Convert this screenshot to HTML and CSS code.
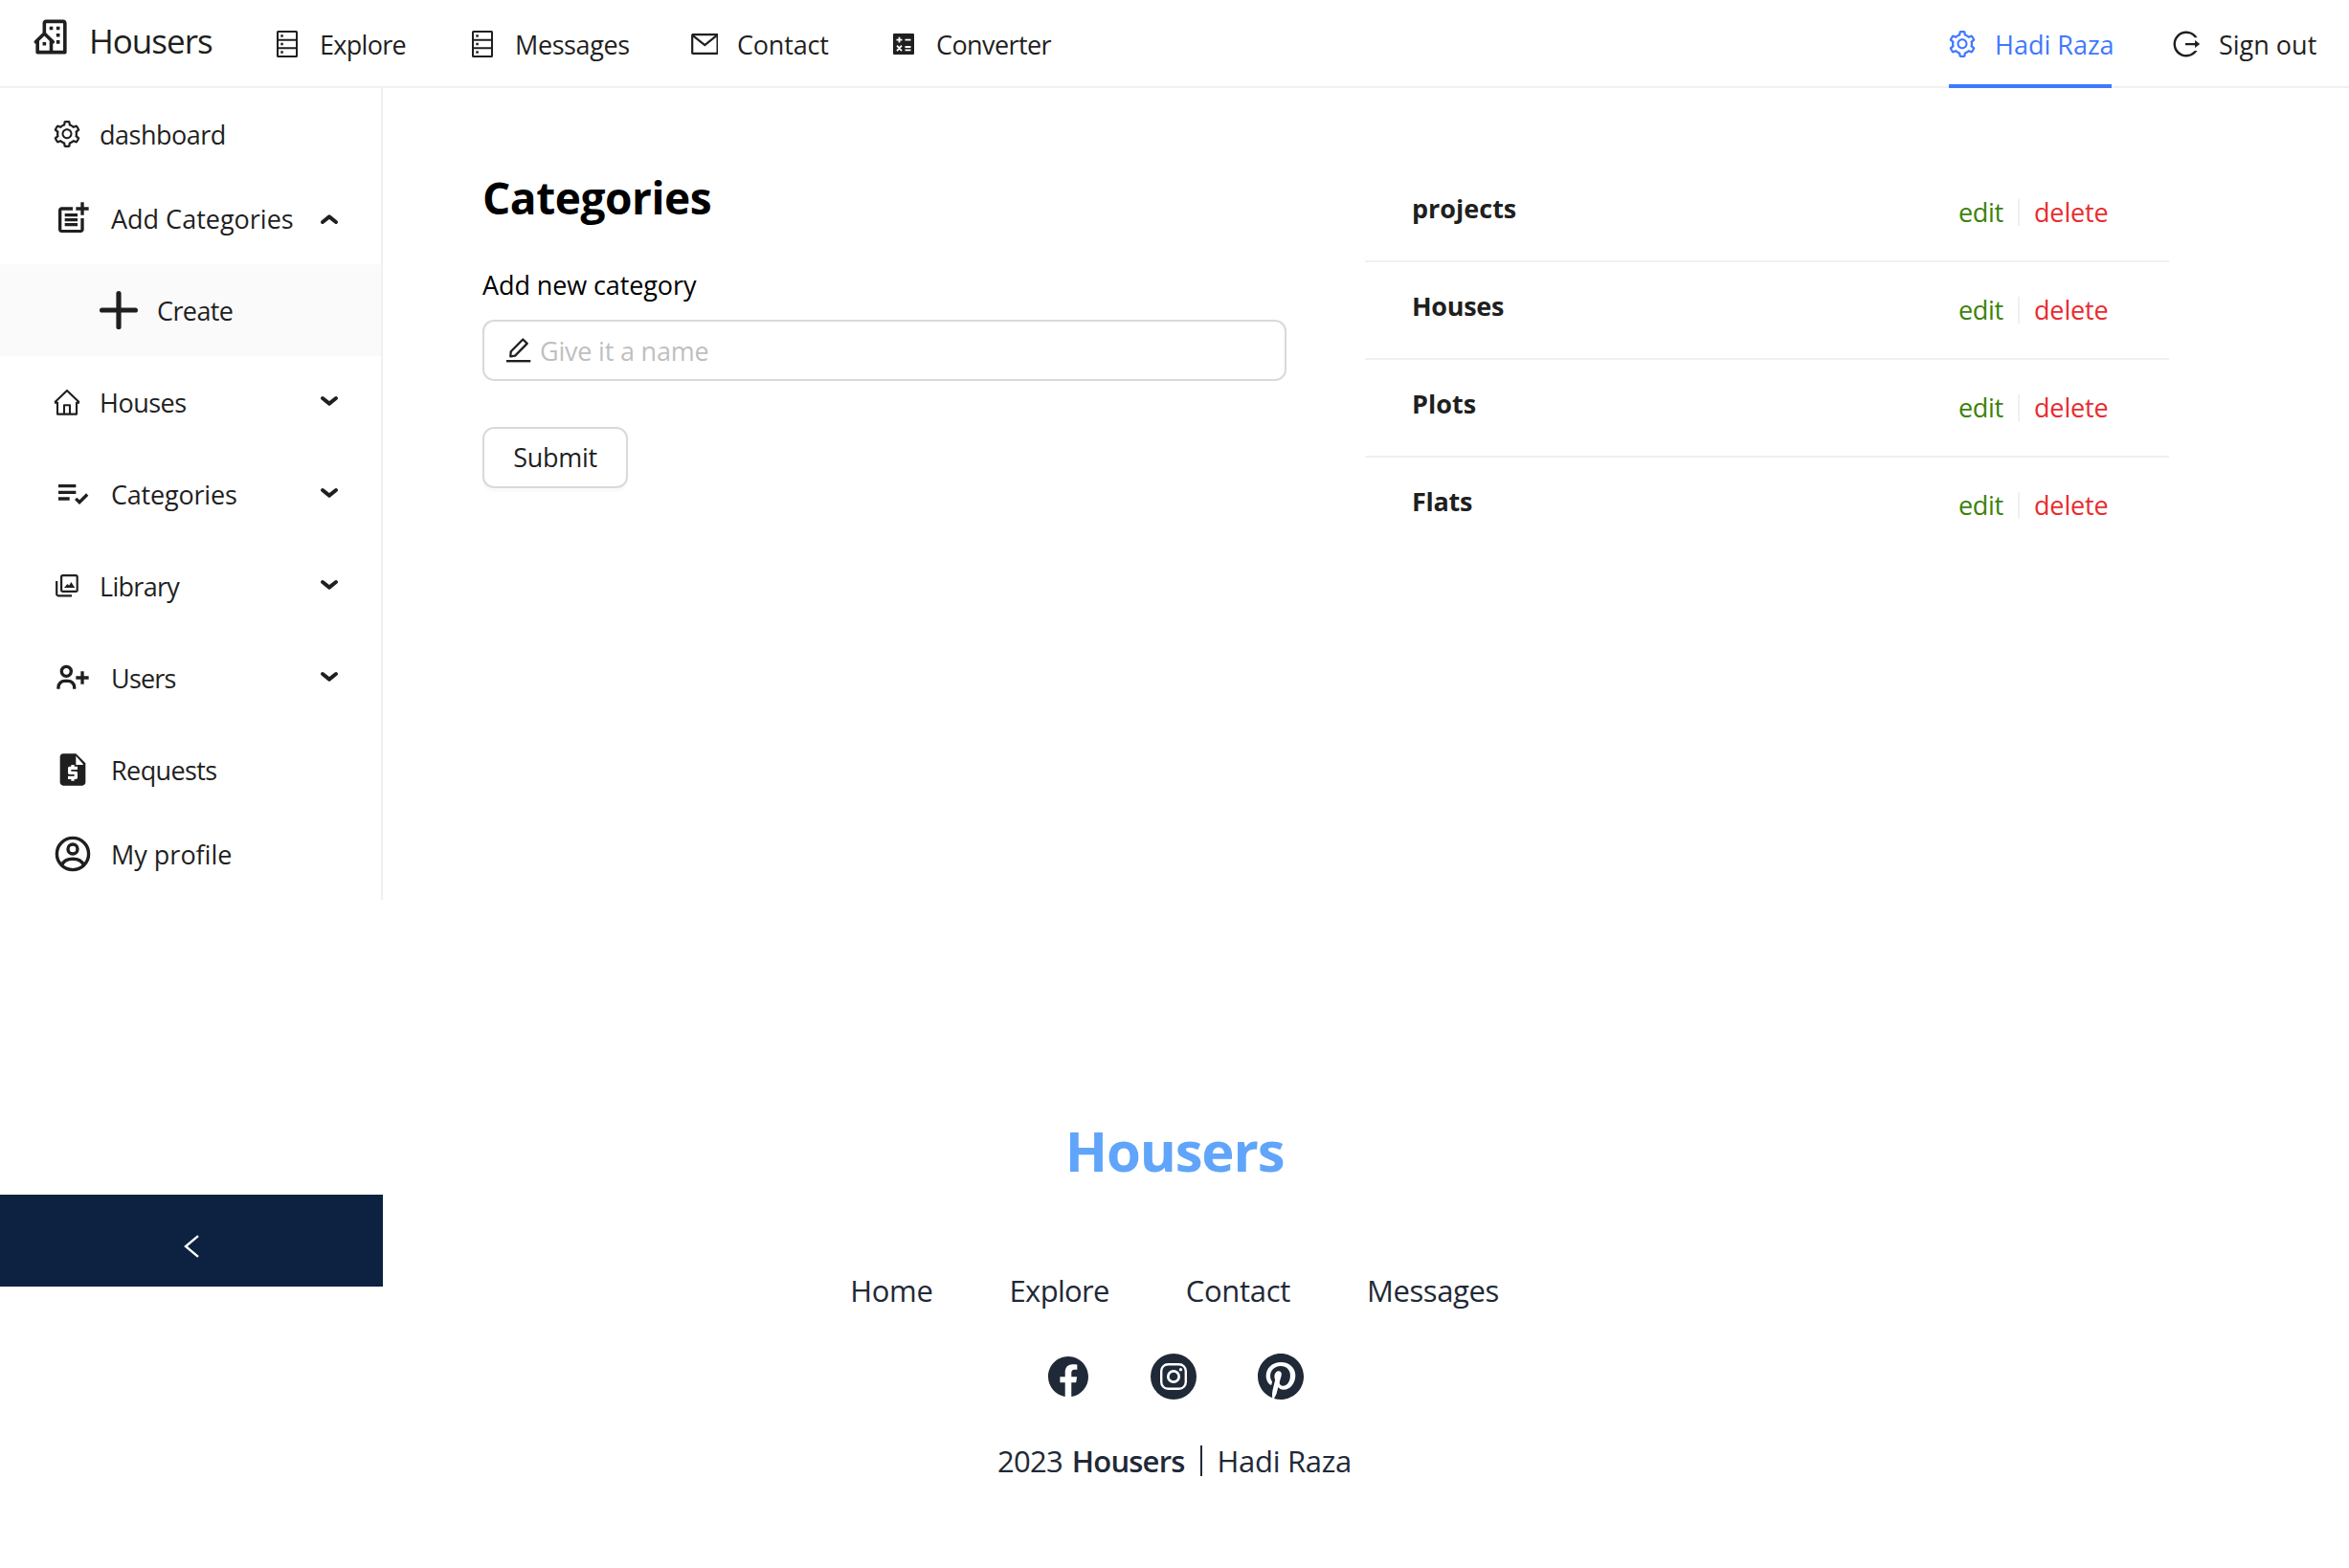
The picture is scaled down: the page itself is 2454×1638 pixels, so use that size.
FILE: index.html
```html
<!DOCTYPE html>
<html lang="en">
<head>
<meta charset="utf-8">
<title>Housers</title>
<link rel="stylesheet" href="styles.css">
</head>
<body>
<svg class="sprite" aria-hidden="true">
  <symbol id="gear" viewBox="64 64 896 896"><path fill="currentColor" d="M924.8 625.7l-65.5-56c3.1-19 4.7-38.4 4.7-57.8s-1.6-38.8-4.7-57.8l65.5-56a32.03 32.03 0 009.3-35.2l-.9-2.6a442.09 442.09 0 00-79.7-137.9l-1.8-2.1a32.12 32.12 0 00-35.1-9.5l-81.3 28.9c-30-24.6-63.5-44-99.7-57.6l-15.7-85a32.05 32.05 0 00-25.8-25.7l-2.7-.5c-52.1-9.4-106.9-9.4-159 0l-2.7.5a32.05 32.05 0 00-25.8 25.7l-15.8 85.4a351.86 351.86 0 00-99 57.4l-81.9-29.1a32 32 0 00-35.1 9.5l-1.8 2.1a446.02 446.02 0 00-79.7 137.9l-.9 2.6c-4.5 12.5-.8 26.5 9.3 35.2l66.3 56.6c-3.1 18.8-4.6 38-4.6 57.1 0 19.2 1.5 38.4 4.6 57.1L99 625.5a32.03 32.03 0 00-9.3 35.2l.9 2.6c18.1 50.4 44.9 96.9 79.7 137.9l1.8 2.1a32.12 32.12 0 0035.1 9.5l81.9-29.1c29.8 24.5 63.1 43.9 99 57.4l15.8 85.4a32.05 32.05 0 0025.8 25.7l2.7.5a449.4 449.4 0 00159 0l2.7-.5a32.05 32.05 0 0025.8-25.7l15.7-85a350 350 0 0099.7-57.6l81.3 28.9a32 32 0 0035.1-9.5l1.8-2.1c34.8-41.1 61.6-87.5 79.7-137.9l.9-2.6c4.5-12.3.8-26.3-9.3-35zM788.3 465.9c2.5 15.1 3.8 30.6 3.8 46.1s-1.3 31-3.8 46.1l-6.6 40.1 74.7 63.9a370.03 370.03 0 01-42.6 73.6L721 702.8l-31.4 25.8c-23.9 19.6-50.5 35-79.3 45.8l-38.1 14.3-17.9 97a377.5 377.5 0 01-85 0l-17.9-97.2-37.8-14.5c-28.5-10.8-55-26.2-78.7-45.7l-31.4-25.9-93.4 33.2c-17-22.9-31.2-47.6-42.6-73.6l75.5-64.5-6.5-40c-2.4-14.9-3.7-30.3-3.7-45.5 0-15.3 1.2-30.6 3.7-45.5l6.5-40-75.5-64.5c11.3-26.1 25.6-50.7 42.6-73.6l93.4 33.2 31.4-25.9c23.7-19.5 50.2-34.9 78.7-45.7l37.9-14.3 17.9-97.2c28.1-3.2 56.8-3.2 85 0l17.9 97 38.1 14.3c28.7 10.8 55.4 26.2 79.3 45.8l31.4 25.8 92.8-32.9c17 22.9 31.2 47.6 42.6 73.6L781.8 426l6.5 39.9zM512 326c-97.2 0-176 78.8-176 176s78.8 176 176 176 176-78.8 176-176-78.8-176-176-176zm79.2 255.2A111.6 111.6 0 01512 614c-29.9 0-58-11.7-79.2-32.8A111.6 111.6 0 01400 502c0-29.9 11.7-58 32.8-79.2C454 401.6 482.1 390 512 390c29.9 0 58 11.6 79.2 32.8A111.6 111.6 0 01624 502c0 29.9-11.7 58-32.8 79.2z"/></symbol>
  <symbol id="database" viewBox="0 0 28 28"><g fill="none" stroke="currentColor" stroke-width="2"><rect x="4" y="1" width="20" height="26" rx=".5"/><path d="M4 9.7h20M4 18.3h20"/></g><path fill="currentColor" d="M7.3 4.2h2.5v2.5H7.3zM7.3 12.8h2.5v2.5H7.3zM7.3 21.3h2.5v2.5H7.3z"/></symbol>
  <symbol id="chev-down" viewBox="0 0 20 12"><path d="M3 3l7 5.6L17 3" fill="none" stroke="currentColor" stroke-width="4" stroke-linecap="round" stroke-linejoin="round"/></symbol>
</svg>

<header class="topbar">
  <a class="brand">
    <svg class="brand-icon" viewBox="0 0 24 24"><path fill="currentColor" d="M19 2H9c-1.103 0-2 .897-2 2v5.586l-4.707 4.707A1 1 0 0 0 3 16v5a1 1 0 0 0 1 1h16a1 1 0 0 0 1-1V4c0-1.103-.897-2-2-2zm-8 18H5v-5.586l3-3 3 3V20zm8 0h-6v-4a.999.999 0 0 0 .707-1.707L9 9.586V4h10v16z M11 6h2v2h-2zm4 0h2v2h-2zm0 4.031h2V12h-2zM15 14h2v2h-2zm-8 1h2v2H7z"/></svg>
    <span class="brand-name">Housers</span>
  </a>
  <nav class="nav">
    <a class="nav-item explore"><svg class="ic"><use href="#database"/></svg><span class="t7">Explore</span></a>
    <a class="nav-item messages"><svg class="ic"><use href="#database"/></svg><span class="t4">Messages</span></a>
    <a class="nav-item contact"><svg class="ic" viewBox="0 0 28 28"><rect x="1.2" y="4.2" width="26.4" height="19.6" rx=".5" fill="none" stroke="currentColor" stroke-width="2.2"/><path d="M1.5 4.8L14.3 15 27 4.8" fill="none" stroke="currentColor" stroke-width="2.2"/></svg><span class="t2">Contact</span></a>
    <a class="nav-item"><svg class="ic" viewBox="0 0 28 28"><rect x="3" y="3" width="22" height="22" rx="1" fill="currentColor"/><path d="M6.5 9.6h6M9.5 6.8v5.6M15.5 9.6h6M7 15.700l5 5.400M12 15.700l-5 5.400M15.500 17h6M15.500 20.400h6" stroke="#fff" stroke-width="1.8"/></svg><span class="t6">Converter</span></a>
  </nav>
  <nav class="nav account">
    <a class="nav-item active"><svg class="ic"><use href="#gear"/></svg><span>Hadi Raza</span></a>
    <a class="nav-item signout"><svg class="ic" viewBox="64 64 896 896"><path fill="currentColor" d="M868 732h-70.3c-4.8 0-9.3 2.1-12.3 5.8-7 8.5-14.5 16.7-22.4 24.5a353.84 353.84 0 01-112.7 75.9A352.8 352.8 0 01512.4 866c-47.9 0-94.3-9.4-137.9-27.8a353.84 353.84 0 01-112.7-75.9 353.28 353.28 0 01-76-112.5C167.3 606.2 158 559.9 158 512s9.4-94.2 27.8-137.8c17.8-42.1 43.4-80 76-112.5s70.5-58.1 112.7-75.9c43.6-18.4 90-27.8 137.9-27.8 47.9 0 94.3 9.3 137.9 27.8 42.2 17.8 80.1 43.4 112.7 75.9 7.9 7.9 15.3 16.1 22.4 24.5 3 3.7 7.6 5.8 12.3 5.8H868c6.3 0 10.2-7 6.7-12.3C798 160.5 663.8 81.6 511.3 82 271.7 82.6 79.6 277.1 82 516.4 84.4 751.9 276.2 942 512.4 942c152.1 0 285.7-78.8 362.3-197.7 3.4-5.3-.4-12.3-6.7-12.3zm88.9-226.3L815 393.7c-5.3-4.2-13-.4-13 6.3v76H488c-4.4 0-8 3.6-8 8v56c0 4.4 3.6 8 8 8h314v76c0 6.7 7.8 10.5 13 6.3l141.9-112a8 8 0 000-12.6z"/></svg><span>Sign out</span></a>
  </nav>
</header>

<div class="shell">
  <aside class="sidebar">
    <a class="side-item"><svg class="ic"><use href="#gear"/></svg><span class="t5">dashboard</span></a>
    <a class="side-item tall"><svg class="ic-lg" viewBox="0 0 24 24"><path fill="currentColor" d="M17 19.22H5V7h7V5H5c-1.1 0-2 .9-2 2v12c0 1.1.9 2 2 2h12c1.1 0 2-.9 2-2v-7h-2v7.22zM19 2h-2v3h-3v2h3v3h2V7h3V5h-3V2zM7 9h8v2H7zM7 12h8v2H7zM7 15h8v2H7z"/></svg><span>Add Categories</span><svg class="chev up"><use href="#chev-down"/></svg></a>
    <a class="side-item tall sub"><svg class="ic-lg" viewBox="0 0 40 40"><path d="M20 2.6v34.8M2.6 20h34.8" stroke="currentColor" stroke-width="5.2" stroke-linecap="round"/></svg><span class="t6">Create</span></a>
    <a class="side-item tall"><svg class="ic" viewBox="0 0 28 28"><path d="M1.2 14.3L14 1.9l12.8 12.4M1 14.6h3M27 14.6h-3M4 14v12.6h20V14M11 26.6v-9.4h6v9.4" fill="none" stroke="currentColor" stroke-width="2.1" stroke-linejoin="round"/></svg><span class="t5">Houses</span><svg class="chev"><use href="#chev-down"/></svg></a>
    <a class="side-item tall"><svg class="ic-lg" viewBox="0 0 24 24"><path fill="currentColor" d="M3 6h11v2H3zM3 10h11v2H3zM3 14h7v2H3z"/><path d="M13.9 14.9l2.3 2.3 4.900-4.900" fill="none" stroke="currentColor" stroke-width="2"/></svg><span class="t2">Categories</span><svg class="chev"><use href="#chev-down"/></svg></a>
    <a class="side-item tall"><svg class="ic" viewBox="0 0 28 28"><path d="M3.2 9v13.4a2 2 0 0 0 2 2H19" fill="none" stroke="currentColor" stroke-width="2.2"/><rect x="8.1" y="3.1" width="16.6" height="16.8" rx="1.6" fill="none" stroke="currentColor" stroke-width="2.2"/><path fill="currentColor" d="M11 16l3.5-4 1.6 1.8L18.3 10l4 6z"/></svg><span class="t7">Library</span><svg class="chev"><use href="#chev-down"/></svg></a>
    <a class="side-item tall"><svg class="ic-lg" viewBox="0 0 24 24"><path fill="currentColor" d="M19 8h-2v3h-3v2h3v3h2v-3h3v-2h-3zM4 8a3.91 3.91 0 0 0 4 4 3.91 3.91 0 0 0 4-4 3.91 3.91 0 0 0-4-4 3.91 3.91 0 0 0-4 4zm6 0a1.91 1.91 0 0 1-2 2 1.91 1.91 0 0 1-2-2 1.91 1.91 0 0 1 2-2 1.91 1.91 0 0 1 2 2zM4 18a3 3 0 0 1 3-3h2a3 3 0 0 1 3 3v1h2v-1a5 5 0 0 0-5-5H7a5 5 0 0 0-5 5v1h2z"/></svg><span class="t8">Users</span><svg class="chev"><use href="#chev-down"/></svg></a>
    <a class="side-item requests"><svg class="ic-lg" viewBox="0 0 24 24"><path fill="currentColor" d="M14 2H6c-1.1 0-1.99.9-1.99 2L4 20c0 1.1.89 2 1.99 2H18c1.1 0 2-.9 2-2V8l-6-6zm1 10h-4v1h3c.55 0 1 .45 1 1v3c0 .55-.45 1-1 1h-1v1h-2v-1H9v-2h4v-1h-3c-.55 0-1-.45-1-1v-3c0-.55.45-1 1-1h1v-1h2v1h2v2zm-1-3V3.5L18.500 8.500V9H14z"/></svg><span class="t6">Requests</span></a>
    <a class="side-item profile"><svg class="ic-lg" viewBox="0 0 40 40"><g fill="none" stroke="currentColor" stroke-width="3.4"><circle cx="20" cy="20" r="16.6"/><circle cx="20" cy="15" r="5"/><path d="M8.600 31.500Q11.500 25.200 20 25.200T31.400 31.500"/></g></svg><span>My profile</span></a>
  </aside>

  <main class="content">
    <form class="form">
      <h1>Categories</h1>
      <label class="t1">Add new category</label>
      <div class="input">
        <svg class="pen" viewBox="0 0 28 28"><path d="M5.3 20.300L5.700 15.300 18.300 2.500 22.700 6.900 10.100 19.600z" fill="none" stroke="currentColor" stroke-width="2.3" stroke-linejoin="round"/><path d="M1 25.200h25.300" stroke="currentColor" stroke-width="2.400"/></svg>
        <span class="placeholder t2">Give it a name</span>
      </div>
      <button type="button" class="submit t3">Submit</button>
    </form>
    <ul class="list">
      <li><b>projects</b><span class="actions"><a class="edit">edit</a><a class="delete">delete</a></span></li>
      <li><b class="t3">Houses</b><span class="actions"><a class="edit">edit</a><a class="delete">delete</a></span></li>
      <li><b>Plots</b><span class="actions"><a class="edit">edit</a><a class="delete">delete</a></span></li>
      <li><b class="t3">Flats</b><span class="actions"><a class="edit">edit</a><a class="delete">delete</a></span></li>
    </ul>
  </main>
</div>

<footer class="footer">
  <h2>Housers</h2>
  <nav class="foot-links"><a class="t3">Home</a><a class="t7">Explore</a><a class="t3">Contact</a><a class="t4">Messages</a></nav>
  <div class="social">
    <svg width="42" height="42" viewBox="0 0 16 16"><path fill="currentColor" d="M16 8.049c0-4.446-3.582-8.05-8-8.05C3.58 0-.002 3.603-.002 8.05c0 4.017 2.926 7.347 6.75 7.951v-5.625h-2.03V8.05H6.75V6.275c0-2.017 1.195-3.131 3.022-3.131.876 0 1.791.157 1.791.157v1.98h-1.009c-.993 0-1.303.621-1.303 1.258v1.51h2.218l-.354 2.326H9.25V16c3.824-.604 6.75-3.934 6.75-7.951z"/></svg>
    <svg width="48" height="48" viewBox="0 0 48 48"><circle cx="24" cy="24" r="24" fill="currentColor"/><rect x="11.200" y="11.200" width="25.600" height="25.600" rx="7" fill="none" stroke="#fff" stroke-width="2.400"/><circle cx="24" cy="24" r="5.700" fill="none" stroke="#fff" stroke-width="2.700"/><circle cx="31.500" cy="16.700" r="1.700" fill="#fff"/></svg>
    <svg class="pin" width="48" height="48" viewBox="0 8 496 496"><path fill="currentColor" d="M496 256c0 137-111 248-248 248-25.600 0-50.200-3.900-73.400-11.100 10.100-16.500 25.200-43.500 30.800-65 3-11.600 15.400-59 15.400-59 8.100 15.400 31.700 28.500 56.800 28.500 74.800 0 128.700-68.800 128.700-154.300 0-81.900-66.900-143.200-152.900-143.200-107 0-163.900 71.800-163.900 150.100 0 36.400 19.400 81.700 50.300 96.100 4.700 2.200 7.200 1.200 8.300-3.300.8-3.400 5-20.300 6.900-28.100.6-2.500.3-4.700-1.700-7.100-10.100-12.500-18.300-35.300-18.300-56.600 0-54.700 41.400-107.600 112-107.600 60.900 0 103.600 41.500 103.600 100.900 0 67.100-33.900 113.600-78 113.600-24.300 0-42.600-20.100-36.700-44.800 7-29.500 20.500-61.300 20.500-82.600 0-19-10.200-34.900-31.400-34.900-24.900 0-44.900 25.700-44.900 60.200 0 22 7.400 36.800 7.400 36.800s-24.500 103.800-29 123.200c-5 21.400-3 51.600-.9 71.200C65.400 450.900 0 361.100 0 256 0 119 111 8 248 8s248 111 248 248z"/></svg>
  </div>
  <p class="copyright"><span class="t8">2023</span><strong class="t8">Housers</strong><i class="bar"></i><span class="t3">Hadi Raza</span></p>
</footer>

<button type="button" class="collapse" aria-label="Collapse menu"><svg viewBox="0 0 16 24"><path d="M15 1.200L2 12l13 10.800" fill="none" stroke="currentColor" stroke-width="2.400"/></svg></button>
</body>
</html>
```
FILE: styles.css
```css
* { box-sizing: border-box; margin: 0; padding: 0; }

body {
  font-family: "Open Sans", "Noto Sans", sans-serif;
  font-size: 27px;
  line-height: 44px;
  color: #1f1f1f;
  background: #fff;
  height: 1638px;
  overflow: hidden;
}

svg { display: block; flex: none; }
.sprite { position: absolute; width: 0; height: 0; }
.ic { width: 28px; height: 28px; }
.ic-lg { width: 40px; height: 40px; }

/* tracking steps, in tenths of a pixel */
.t1 { letter-spacing: -0.1px; }
.t2 { letter-spacing: -0.2px; }
.t3 { letter-spacing: -0.3px; }
.t4 { letter-spacing: -0.4px; }
.t5 { letter-spacing: -0.5px; }
.t6 { letter-spacing: -0.6px; }
.t7 { letter-spacing: -0.7px; }
.t8 { letter-spacing: -0.8px; }

/* top bar */
.topbar {
  display: flex;
  height: 92px;
  border-bottom: 2px solid #f0f0f0;
  padding: 0 30px 0 32px;
}
.brand { display: flex; width: 254px; gap: 18px; padding-top: 17px; }
.brand-icon { width: 43px; height: 43px; }
.brand-name { font-size: 35px; letter-spacing: -1px; line-height: 52px; }
.nav { display: flex; height: 92px; }
.nav-item { display: flex; align-items: center; gap: 20px; white-space: nowrap; }
.nav-item span { padding-top: 1px; }
.explore { width: 204px; }
.messages { width: 232px; }
.contact { width: 208px; }
.account { margin-left: auto; gap: 64px; }
.active { color: #4078ff; border-bottom: 4px solid #4078ff; padding-top: 4px; width: 170px; }
.signout { width: 154px; }

/* sidebar */
.shell { display: flex; height: 1048px; }
.sidebar {
  display: flex;
  flex-direction: column;
  width: 400px;
  height: 848px;
  padding-top: 8px;
  border-right: 2px solid #f0f0f0;
}
.side-item { display: flex; align-items: center; gap: 20px; height: 80px; padding: 0 44px 0 56px; white-space: nowrap; }
.side-item span { padding-top: 1px; }
.tall { height: 96px; }
.sub { background: #fafafa; padding-left: 104px; }
.requests { margin-top: 8px; }
.profile { margin-top: 8px; }
.chev { width: 20px; height: 12px; margin-left: auto; transform: translateY(-1px); }
.chev.up { transform: translateY(1px) scaleY(-1); }

/* content */
.content { display: grid; grid-template-columns: 840px 840px; column-gap: 82px; padding: 80px 0 0 104px; align-items: start; }
.form { display: flex; flex-direction: column; align-items: flex-start; color: #000; padding-top: 1px; }
h1 { font-size: 46px; line-height: 66px; font-weight: 700; letter-spacing: -0.45px; margin-bottom: 37px; }
.input {
  display: flex;
  align-items: center;
  width: 840px;
  height: 64px;
  margin: 14px 0 48px;
  padding-left: 22px;
  border: 2px solid #d9d9d9;
  border-radius: 12px;
}
.pen { width: 28px; height: 28px; color: #1f1f1f; }
.placeholder { color: #bfbfbf; margin-left: 8px; padding-top: 1px; }
.submit {
  width: 152px;
  height: 64px;
  padding-bottom: 2px;
  font-family: inherit;
  font-size: 27px;
  color: #1f1f1f;
  background: #fff;
  border: 2px solid #d9d9d9;
  border-radius: 12px;
  box-shadow: 0 4px 0 rgba(0, 0, 0, 0.02);
}
.list { list-style: none; }
.list li { display: flex; justify-content: space-between; height: 102px; padding: 24px 0 0 49px; border-bottom: 2px solid #f0f0f0; }
.list li:last-child { border-bottom: 0; }
.list b { font-weight: 700; }
.actions { display: flex; align-items: center; width: 220px; height: 52px; }
.edit { color: #3b820a; width: 62px; letter-spacing: -0.35px; }
.delete { color: #e82c2f; letter-spacing: -0.15px; border-left: 2px solid #f0f0f0; padding-left: 15px; line-height: 28px; height: 28px; }

/* footer */
.footer { display: flex; flex-direction: column; align-items: center; padding-top: 22px; color: #1f2937; font-size: 31px; }
h2 { font-size: 58px; line-height: 80px; font-weight: 700; letter-spacing: -1.15px; color: #60a5fa; }
.foot-links { display: flex; gap: 80px; margin-top: 84px; }
.social { display: flex; align-items: center; gap: 65px; margin-top: 44px; height: 48px; padding-left: 3px; }
.pin { margin: -1px 0 0 -1px; }
.copyright { display: flex; align-items: center; margin-top: 42px; white-space: nowrap; }
.copyright strong { font-weight: 600; margin-left: 10px; }
.bar { width: 2px; height: 32px; margin: 0 16px 0 16px; background: #1f2937; }

/* collapse trigger stays over the page */
.collapse {
  position: absolute;
  left: 0;
  top: 1248px;
  display: flex;
  align-items: center;
  justify-content: center;
  width: 400px;
  height: 96px;
  padding-top: 12px;
  border: 0;
  color: #fff;
  background: #0c2240;
}
.collapse svg { width: 16px; height: 24px; }
```
